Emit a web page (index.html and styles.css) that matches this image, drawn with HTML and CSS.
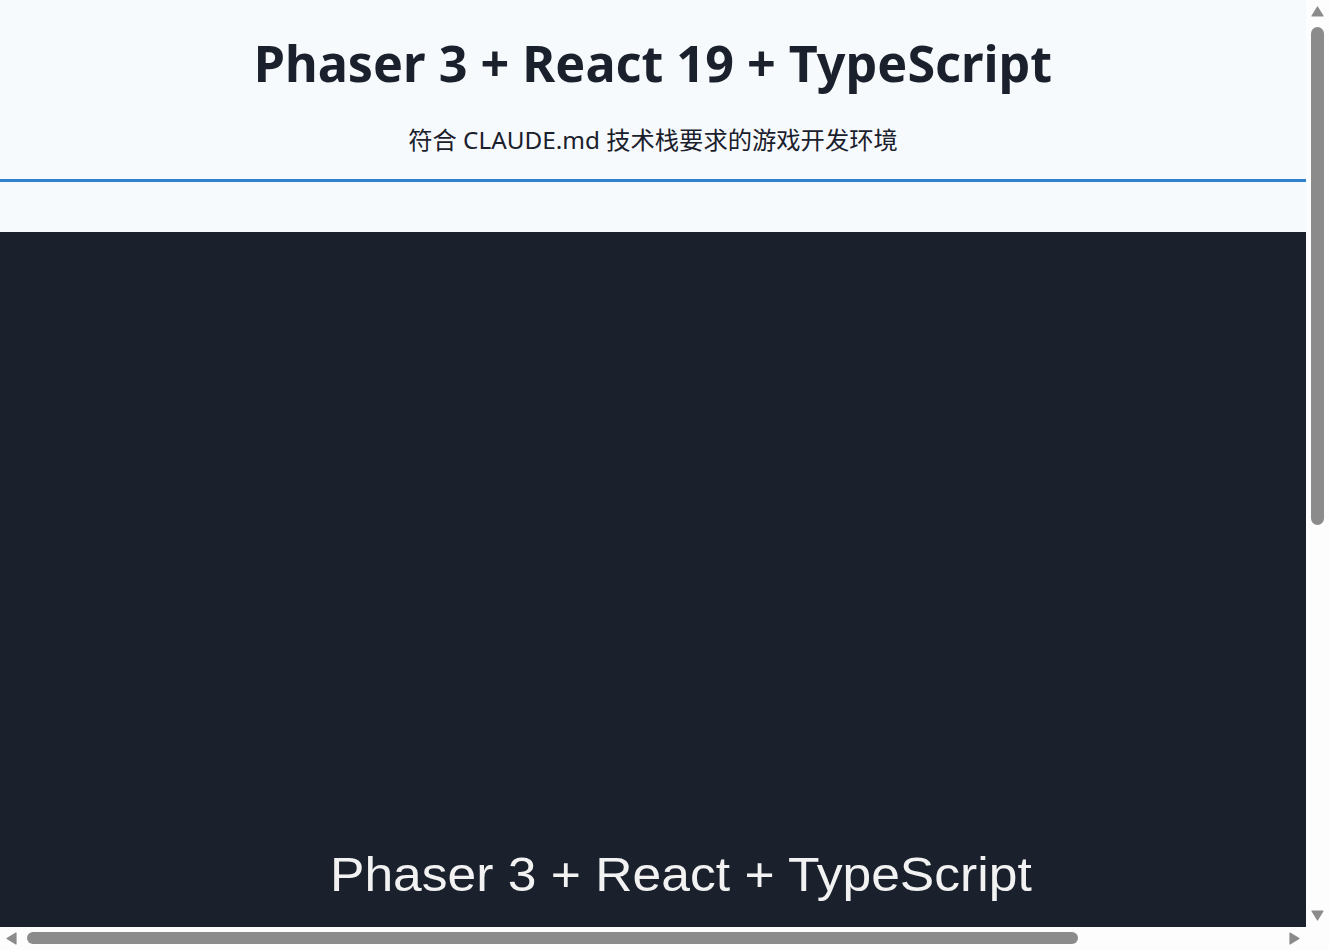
FILE: index.html
```html
<!DOCTYPE html>
<html lang="zh-CN">
<head>
<meta charset="utf-8">
<title>Phaser 3 + React 19 + TypeScript</title>
<link rel="stylesheet" href="styles.css">
</head>
<body>
<div class="shell">
  <div class="viewport">
    <div class="app">
      <header class="app-header">
        <h1 class="app-title">Phaser 3 + React 19 + TypeScript</h1>
        <p class="app-subtitle">符合 CLAUDE.md 技术栈要求的游戏开发环境</p>
      </header>
      <main class="game-wrap">
        <div class="game-canvas">
          <div class="game-text">Phaser 3 + React + TypeScript</div>
        </div>
      </main>
    </div>
  </div>
  <div class="vbar">
    <div class="sb-btn">
      <svg width="13" height="11" viewBox="0 0 13 11"><polygon points="6.5,1 12,10 1,10" fill="#8b8b8b" stroke="#8b8b8b" stroke-width="1.2" stroke-linejoin="round"/></svg>
    </div>
    <div class="vtrack"><div class="vthumb"></div></div>
    <div class="sb-btn">
      <svg width="13" height="11" viewBox="0 0 13 11"><polygon points="1,1 12,1 6.5,10" fill="#8b8b8b" stroke="#8b8b8b" stroke-width="1.2" stroke-linejoin="round"/></svg>
    </div>
  </div>
  <div class="hbar">
    <div class="sb-btn">
      <svg width="11" height="13" viewBox="0 0 11 13"><polygon points="1,6.5 10,1 10,12" fill="#8b8b8b" stroke="#8b8b8b" stroke-width="1.2" stroke-linejoin="round"/></svg>
    </div>
    <div class="htrack"><div class="hthumb"></div></div>
    <div class="sb-btn">
      <svg width="11" height="13" viewBox="0 0 11 13"><polygon points="1,1 10,6.5 1,12" fill="#8b8b8b" stroke="#8b8b8b" stroke-width="1.2" stroke-linejoin="round"/></svg>
    </div>
  </div>
  <div class="corner"></div>
</div>
</body>
</html>
```
FILE: styles.css
```css
html, body {
  margin: 0;
  padding: 0;
  height: 100%;
  overflow: hidden;
  background: #f7fafc;
}
body {
  font-family: "Noto Sans", "Noto Sans CJK SC", sans-serif;
  color: #1a202c;
}
.shell {
  width: 100vw;
  height: 100vh;
  display: grid;
  grid-template-columns: 1fr 23px;
  grid-template-rows: 1fr 23px;
}
.viewport {
  overflow: hidden;
  min-width: 0;
  min-height: 0;
  background: #f7fafc;
}
.app {
  width: 100%;
}
.app-header {
  text-align: center;
  padding: 30px 0 23px;
  border-bottom: 3px solid #3182ce;
}
.app-title {
  margin: 0;
  font-size: 50.3px;
  font-weight: 700;
  line-height: 65px;
  color: #1a202c;
  white-space: nowrap;
}
.app-subtitle {
  margin: 29px 0 0;
  font-size: 24.3px;
  line-height: 32px;
  color: #1a202c;
  white-space: nowrap;
}
.game-wrap {
  padding-top: 50px;
  width: 1551px;
}
.game-canvas {
  width: 1551px;
  height: 1376px;
  background: #1a202c;
  display: flex;
  flex-direction: column;
}
.game-text {
  margin-top: 612px;
  margin-left: 330px;
  font-family: "Liberation Sans", Arial, sans-serif;
  font-size: 49px;
  line-height: 60px;
  color: #f2f2f2;
  filter: blur(0.7px);
  white-space: nowrap;
  transform: scaleX(1.053);
  transform-origin: left center;
  align-self: flex-start;
}

/* scrollbars */
.vbar, .hbar, .corner {
  background: #fdfdfd;
}
.vbar {
  display: flex;
  flex-direction: column;
}
.hbar {
  display: flex;
  flex-direction: row;
}
.sb-btn {
  width: 23px;
  height: 23px;
  flex: none;
  display: flex;
  align-items: center;
  justify-content: center;
}
.vtrack {
  flex: 1;
  padding: 4px 5px 0;
}
.vthumb {
  width: 13px;
  height: 498px;
  background: #8b8b8b;
  border-radius: 7px;
}
.htrack {
  flex: 1;
  padding: 5px 0 0 4px;
}
.hthumb {
  width: 1051px;
  height: 12px;
  background: #8b8b8b;
  border-radius: 6px;
}
```
